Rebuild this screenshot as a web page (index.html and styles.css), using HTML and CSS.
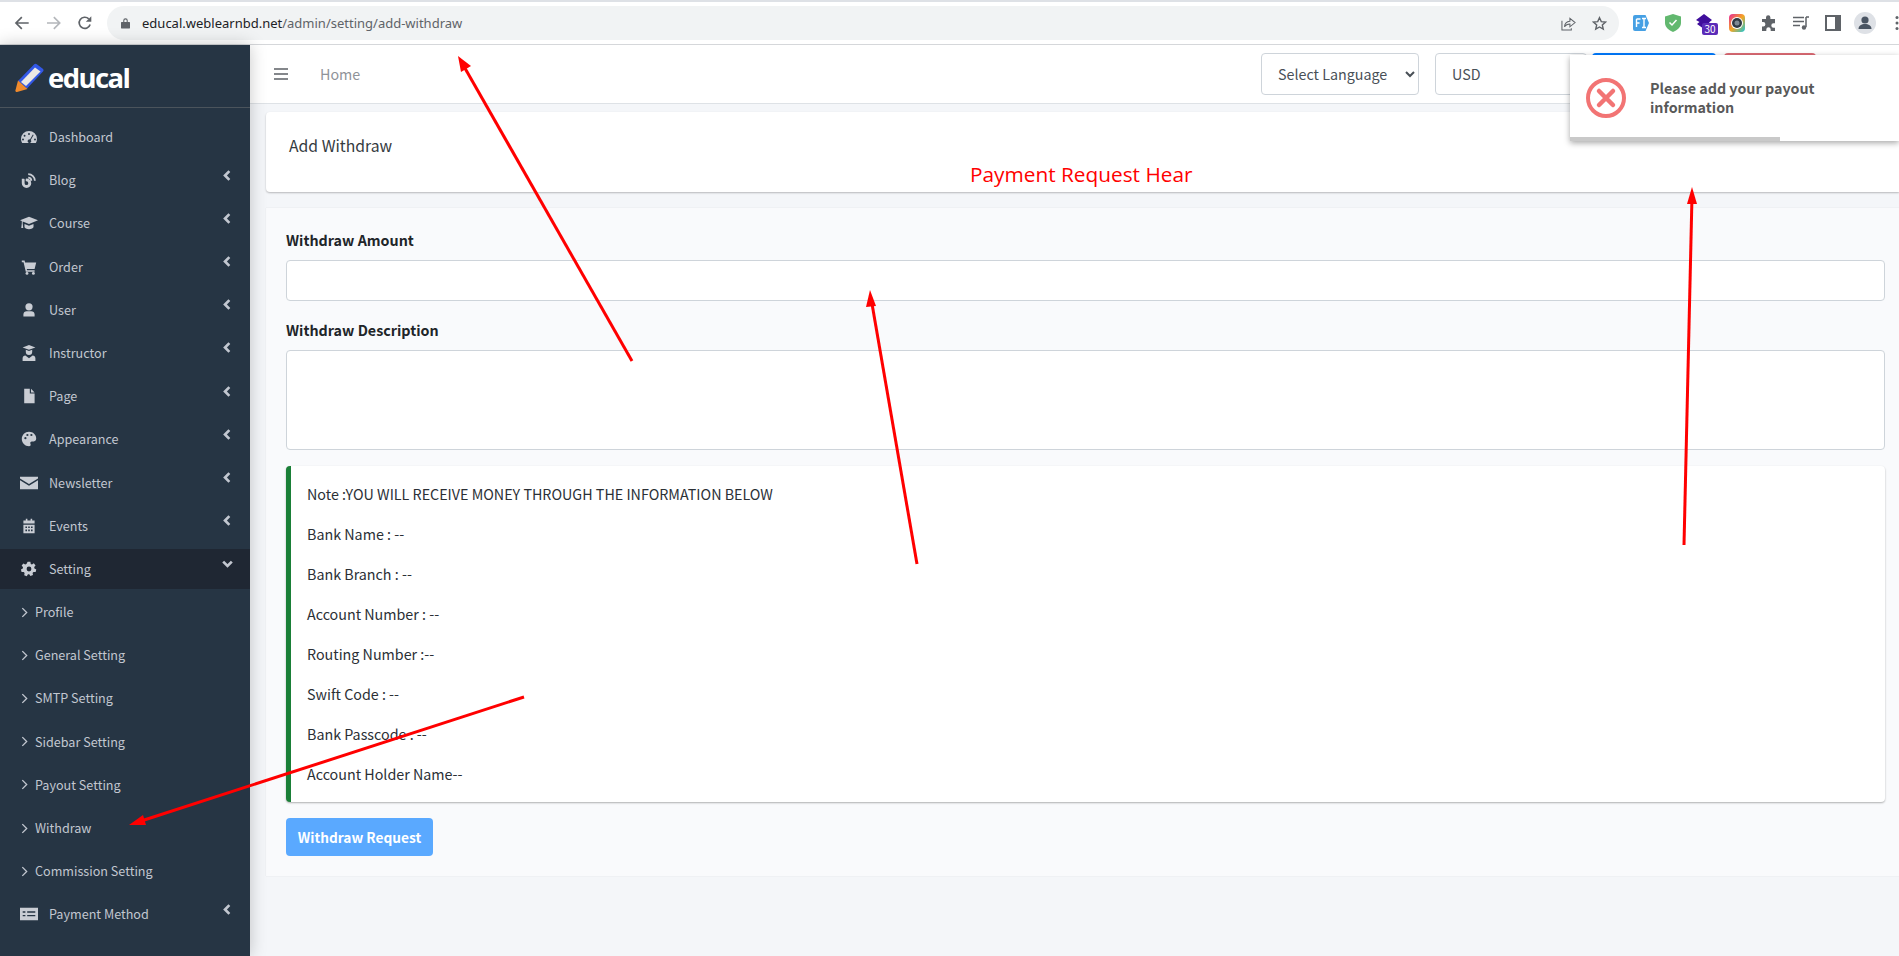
FILE: index.html
```html
<!DOCTYPE html>
<html lang="en">
<head>
<meta charset="utf-8">
<title>Add Withdraw</title>
<link rel="stylesheet" href="styles.css">
</head>
<body>
<svg width="0" height="0" class="defs">
  <symbol id="i-left" viewBox="0 0 10 14"><path d="M8 1.500 2.500 7 8 12.500" fill="none" stroke="currentColor" stroke-width="3.400"/></symbol>
  <symbol id="i-down" viewBox="0 0 14 10"><path d="M1.500 2 7 7.500 12.500 2" fill="none" stroke="currentColor" stroke-width="3.400"/></symbol>
  <symbol id="i-sub" viewBox="0 0 8 12"><path d="M1.500 1 6.500 6 1.500 11" fill="none" stroke="currentColor" stroke-width="1.500"/></symbol>
</svg>

<header class="browser">
  <div class="tabstrip"></div>
  <div class="toolbar">
    <svg class="nav-ic" viewBox="0 0 16 16"><path d="M15 8H2M8 2 2 8l6 6" fill="none" stroke="#5f6368" stroke-width="1.700"/></svg>
    <svg class="nav-ic" viewBox="0 0 16 16"><path d="M1 8h13M8 2l6 6-6 6" fill="none" stroke="#b4b7bb" stroke-width="1.700"/></svg>
    <svg class="nav-ic" viewBox="0 0 16 16"><path d="M13.400 9.500A5.700 5.700 0 1 1 12 3.800" fill="none" stroke="#5f6368" stroke-width="1.700"/><path d="M14.600 1.200v5.600H9z" fill="#5f6368"/></svg>
    <div class="omnibox">
      <svg class="lock" viewBox="0 0 10 12"><path d="M2.500 5V3.300a2.500 2.500 0 0 1 5 0V5H9a.8.8 0 0 1 1 .8v5.300a.8.8 0 0 1-1 .9H1a.8.8 0 0 1-1-.9V5.800A.8.8 0 0 1 1 5zm1.200 0h2.600V3.300a1.300 1.300 0 0 0-2.600 0z" fill="#5f6368"/></svg>
      <span class="url"><span class="host">educal.weblearnbd.net</span>/admin/setting/add-withdraw</span>
      <svg class="omni-ic share" viewBox="0 0 16 16"><path d="M9.500 5.500V2.500L15 7l-5.500 4.500V8.500C6.500 8.500 5 9.500 3.700 11.500 4 8 6 5.800 9.500 5.500zM1 5v10h10v-2" fill="none" stroke="#5f6368" stroke-width="1.100"/></svg>
      <svg class="omni-ic" viewBox="0 0 16 16"><path d="M8 1.800 9.900 6l4.500.5-3.400 3 1 4.500L8 11.700 4 14l1-4.500-3.400-3L6.100 6z" fill="none" stroke="#5f6368" stroke-width="1.500"/></svg>
    </div>
    <div class="exts">
      <svg class="ext" viewBox="0 0 18 18"><path d="M3 1h10.500L17 9l-3.500 8H3a2 2 0 0 1-2-2V3a2 2 0 0 1 2-2z" fill="#46a0e4"/><path d="M4.500 5h4M4.500 5v8M4.500 9h3M10 4.500h4M12 4.500v9M10 13.500h4" stroke="#fff" stroke-width="1.400" fill="none"/></svg>
      <svg class="ext" viewBox="0 0 18 18"><path d="M9 0 17 2.500V9c0 4-4 7.500-8 9-4-1.500-8-5-8-9V2.500z" fill="#62b86f"/><path d="m5.500 8.500 2.500 2.500 4.500-5" stroke="#fff" stroke-width="1.500" fill="none"/></svg>
      <div class="ext ext-badge">
        <svg viewBox="0 0 18 18"><path d="M8 0 16 6 13 8.500 15 10 8 15 1 10 3.500 8 0 6z" fill="#3f0e9c"/></svg>
        <span class="badge-num">30</span>
      </div>
      <svg class="ext" viewBox="0 0 18 18"><defs><linearGradient id="rb" x1="0" y1="0" x2="1" y2="1"><stop offset="0" stop-color="#e8279a"/><stop offset=".5" stop-color="#f5a623"/><stop offset="1" stop-color="#19c7d8"/></linearGradient></defs><rect x="1" y="0" width="16" height="18" rx="4" fill="url(#rb)"/><circle cx="9" cy="9" r="6" fill="#fff"/><circle cx="9" cy="9" r="5" fill="#2f3a44"/><circle cx="9" cy="9" r="2.500" fill="#7e8a94"/></svg>
      <svg class="ext" viewBox="0 0 18 18"><path d="M2 5h4V3.500a2.200 2.200 0 0 1 4.400 0V5H15v4.300h-1.500a2.200 2.200 0 0 0 0 4.400H15V17h-4.300v-1.500a2.200 2.200 0 0 0-4.400 0V17H2v-4.500h1.200a2.200 2.200 0 0 0 0-4.400H2z" fill="#5f6368"/></svg>
      <svg class="ext" viewBox="0 0 18 18"><path d="M1 3.500h11M1 7.500h11M1 11.500h7" stroke="#5f6368" stroke-width="1.500" fill="none"/><path d="M14 3v10M14 3h3" stroke="#5f6368" stroke-width="1.500" fill="none"/><circle cx="12" cy="13.500" r="2.200" fill="#5f6368"/></svg>
      <svg class="ext" viewBox="0 0 18 18"><rect x="2" y="2" width="14" height="14" fill="none" stroke="#5f6368" stroke-width="2"/><rect x="11" y="2" width="5" height="14" fill="#5f6368"/></svg>
      <div class="avatar"><svg viewBox="0 0 22 22"><circle cx="11" cy="8" r="3.600" fill="#4a5563"/><path d="M4.500 17c0-3.500 3-5 6.500-5s6.500 1.500 6.500 5z" fill="#4a5563"/></svg></div>
      <svg class="dots" viewBox="0 0 4 16"><circle cx="2" cy="2.500" r="1.500" fill="#5f6368"/><circle cx="2" cy="8" r="1.500" fill="#5f6368"/><circle cx="2" cy="13.500" r="1.500" fill="#5f6368"/></svg>
    </div>
  </div>
</header>

<div class="app">
  <aside class="sidebar">
    <div class="brand">
      <svg class="brand-ic" viewBox="0 0 30 30"><path d="M3 19 19 2.500c1-1 1.800-1 2.800-.2l6 4.500c1 .8 1 1.800.2 2.700L12 26.500z" fill="#3358e6"/><path d="M6 20 20 5.500l5.500 4L11 24z" fill="#ece8e4"/><path d="M3 18.500 12.500 27 2 30c-1 .2-1.800-.5-1.600-1.500z" fill="#f08a2c"/></svg>
      <span class="brand-text">educal</span>
    </div>
    <nav class="menu">
      <a class="item"><svg class="mi" viewBox="0 0 20 20"><path d="M10 2.500A10 10 0 0 0 0 12.500c0 1.800.5 3.500 1.400 5h17.200a10 10 0 0 0 1.400-5 10 10 0 0 0-10-10zM10 5a1.200 1.200 0 1 1 0 2.400A1.200 1.200 0 0 1 10 5zM4.500 7.300a1.200 1.200 0 1 1 0 2.400 1.200 1.200 0 0 1 0-2.400zM2.500 12a1.200 1.200 0 1 1 0 2.400 1.200 1.200 0 0 1 0-2.400zm15 0a1.200 1.200 0 1 1 0 2.400 1.200 1.200 0 0 1 0-2.400zM14.800 7l1 .6-3.600 6a2.300 2.300 0 1 1-1-.6z" fill="currentColor" fill-rule="evenodd"/></svg><span class="lbl">Dashboard</span></a>
      <a class="item"><svg class="mi" viewBox="0 0 20 20"><path d="M1 8.500h2.700a.9.900 0 0 1 .8.900V14a2.300 2.300 0 1 0 2.300-2.300.9.900 0 0 1-.9-.9V9a.9.900 0 0 1 .9-.9A5.900 5.900 0 1 1 1 14zM9 1.500a9.500 9.500 0 0 1 9.500 9.500h-2.300A7.200 7.200 0 0 0 9 3.800zM9 6a5 5 0 0 1 5 5h-2.200A2.800 2.800 0 0 0 9 8.200z" fill="currentColor"/></svg><span class="lbl">Blog</span><svg class="chev"><use href="#i-left"/></svg></a>
      <a class="item"><svg class="mi wide" viewBox="0 0 20 16"><path d="M10 1 20 5l-10 4L3 6.200v2.300l.6 5H1.400l.6-5V5.800L0 5zM5 9l5 2 5-2v3.500c0 1-2.500 2.500-5 2.500s-5-1.500-5-2.500z" fill="currentColor"/></svg><span class="lbl">Course</span><svg class="chev"><use href="#i-left"/></svg></a>
      <a class="item"><svg class="mi" viewBox="0 0 20 20"><path d="M1 2h3.500l.6 2.500H19l-2 8H7.200l.4 1.500H17v2H6L3.200 4H1z" fill="currentColor"/><circle cx="7.500" cy="18" r="1.800" fill="currentColor"/><circle cx="15.500" cy="18" r="1.800" fill="currentColor"/></svg><span class="lbl">Order</span><svg class="chev"><use href="#i-left"/></svg></a>
      <a class="item"><svg class="mi" viewBox="0 0 20 20"><circle cx="10" cy="6" r="4.500" fill="currentColor"/><path d="M3 18v-2.500C3 13 5 11.500 7 11.500h6c2 0 4 1.500 4 4V18z" fill="currentColor"/></svg><span class="lbl">User</span><svg class="chev"><use href="#i-left"/></svg></a>
      <a class="item"><svg class="mi" viewBox="0 0 20 20"><path d="M2 3 10 0l8 3-8 3zM6 6l4 1.500L14 6v2.500a4 4 0 0 1-8 0zM5.500 13l4.500 3.500 4.500-3.500c2 0 3.500 1.500 3.500 3.500V20H2v-3.500C2 14.500 3.500 13 5.500 13z" fill="currentColor"/></svg><span class="lbl">Instructor</span><svg class="chev"><use href="#i-left"/></svg></a>
      <a class="item"><svg class="mi" viewBox="0 0 20 20"><path d="M4 1h7v6h6v12H4zM12.500 1 17 5.500h-4.500z" fill="currentColor"/></svg><span class="lbl">Page</span><svg class="chev"><use href="#i-left"/></svg></a>
      <a class="item"><svg class="mi" viewBox="0 0 20 20"><path d="M10 1C5 1 1 5 1 10s4 9 9 9c2 0 2.500-1.500 1.800-3-.7-1.500.2-3 1.800-3H16c2 0 3-1.500 3-3.500C19 4.500 15 1 10 1z" fill="currentColor"/><circle cx="5.500" cy="9" r="1.400" fill="#263544"/><circle cx="8" cy="5" r="1.400" fill="#263544"/><circle cx="13" cy="5" r="1.400" fill="#263544"/></svg><span class="lbl">Appearance</span><svg class="chev"><use href="#i-left"/></svg></a>
      <a class="item"><svg class="mi wide" viewBox="0 0 20 16"><path d="M0 1h20v2L10 9 0 3zM0 5l10 6 10-6v10H0z" fill="currentColor"/></svg><span class="lbl">Newsletter</span><svg class="chev"><use href="#i-left"/></svg></a>
      <a class="item"><svg class="mi" viewBox="0 0 20 20"><path d="M6 1h2v2h4V1h2v2h3v4H3V3h3zM3 8.500h14V19H3zM5.500 10.500v2h2v-2zm3.500 0v2h2v-2zm3.500 0v2h2v-2zM5.500 14.500v2h2v-2zm3.500 0v2h2v-2zm3.500 0v2h2v-2z" fill="currentColor" fill-rule="evenodd"/></svg><span class="lbl">Events</span><svg class="chev"><use href="#i-left"/></svg></a>
      <a class="item open"><svg class="mi" viewBox="0 0 20 20"><path d="M8.300 1h3.400l.5 2.600 1.500.7 2.300-1.400 2.200 2.700-1.700 2 .3 1.700 2.300 1.200-.8 3.300-2.700-.1-1.100 1.300.5 2.600-3.200 1.300-1.500-2.200h-1.600L7.200 19l-3.200-1.300.5-2.600-1.100-1.300-2.700.1-.8-3.300 2.300-1.200.3-1.700-1.700-2 2.200-2.700 2.300 1.400 1.500-.7zM10 7a3 3 0 1 0 0 6 3 3 0 0 0 0-6z" fill="currentColor" fill-rule="evenodd"/></svg><span class="lbl">Setting</span><svg class="chev-d"><use href="#i-down"/></svg></a>
      <a class="item sub"><svg class="subchev"><use href="#i-sub"/></svg><span>Profile</span></a>
      <a class="item sub"><svg class="subchev"><use href="#i-sub"/></svg><span>General Setting</span></a>
      <a class="item sub"><svg class="subchev"><use href="#i-sub"/></svg><span>SMTP Setting</span></a>
      <a class="item sub"><svg class="subchev"><use href="#i-sub"/></svg><span>Sidebar Setting</span></a>
      <a class="item sub"><svg class="subchev"><use href="#i-sub"/></svg><span>Payout Setting</span></a>
      <a class="item sub"><svg class="subchev"><use href="#i-sub"/></svg><span>Withdraw</span></a>
      <a class="item sub"><svg class="subchev"><use href="#i-sub"/></svg><span>Commission Setting</span></a>
      <a class="item"><svg class="mi wide" viewBox="0 0 20 14"><path d="M0 0h20v14H0zM8 4v1.500h9V4zM8 8v1.500h9V8zM3 4v1.500h3V4zM3 8v1.500h3V8z" fill="currentColor" fill-rule="evenodd"/></svg><span class="lbl">Payment Method</span><svg class="chev"><use href="#i-left"/></svg></a>
    </nav>
  </aside>

  <main class="main">
    <div class="topnav">
      <svg class="burger" viewBox="0 0 14 12"><path d="M0 1h14M0 6h14M0 11h14" stroke="#5c6066" stroke-width="1.600"/></svg>
      <span class="home">Home</span>
      <div class="top-right">
        <select class="ctl lang"><option>Select Language</option></select>
        <div class="ctl cur">USD</div>
        <div class="btn-peek blue"></div>
        <div class="btn-peek red"></div>
      </div>
    </div>
    <div class="content">
      <section class="title-card"><h1>Add Withdraw</h1></section>
      <section class="form-card">
        <label class="field-label">Withdraw Amount</label>
        <input class="field" type="text">
        <label class="field-label second">Withdraw Description</label>
        <textarea class="field area"></textarea>
        <div class="note">
          <p>Note :YOU WILL RECEIVE MONEY THROUGH THE INFORMATION BELOW</p>
          <p>Bank Name : --</p>
          <p>Bank Branch : --</p>
          <p>Account Number : --</p>
          <p>Routing Number :--</p>
          <p>Swift Code : --</p>
          <p>Bank Passcode : --</p>
          <p>Account Holder Name--</p>
        </div>
        <button class="submit" type="button">Withdraw Request</button>
      </section>
    </div>
  </main>
</div>

<div class="toast">
  <svg class="toast-ic" viewBox="0 0 40 40"><circle cx="20" cy="20" r="18" fill="none" stroke="#f27474" stroke-width="4"/><path d="M13 13l14 14M27 13 13 27" stroke="#f27474" stroke-width="4.500" stroke-linecap="round"/></svg>
  <div class="toast-text">Please add your payout information</div>
  <div class="toast-bar"></div>
</div>

<svg class="marks" viewBox="0 0 1899 956">
  <path d="M632 361 462 63" class="ln"/><path d="M458 56 471 66 461 72z" class="hd"/>
  <path d="M917 564 871 298" class="ln"/><path d="M870 290 876 306 866 307z" class="hd"/>
  <path d="M1684 545 1692 196" class="ln"/><path d="M1692 187 1697 204 1687 204z" class="hd"/>
  <path d="M524 697 138 822" class="ln"/><path d="M129 825 143 815 146 825z" class="hd"/>
</svg>
<span class="callout">Payment Request Hear</span>
</body>
</html>
```
FILE: styles.css
```css
* { box-sizing: border-box; }
html, body { margin: 0; height: 956px; overflow: hidden; }
body {
  width: 1899px;
  position: relative;
  display: flex;
  flex-direction: column;
  background: #f4f6f9;
  font-family: "Noto Sans CJK SC", "Noto Sans", sans-serif;
  font-size: 14.300px;
  line-height: 24px;
  color: #212529;
}
.defs { position: absolute; }

/* browser chrome */
.browser { height: 45px; flex: none; background: #fff; border-bottom: 1px solid #d5d7da; }
.tabstrip { height: 2px; background: #dee1e6; }
.toolbar { height: 42px; display: flex; align-items: center; padding-left: 14px; }
.nav-ic { width: 16px; height: 16px; margin-right: 16px; }
.omnibox {
  width: 1512px; height: 34px; margin-left: -2px;
  flex: none;
  display: flex; align-items: center;
  background: #f1f3f4; border-radius: 17px;
  padding: 0 12px 0 14px;
}
.lock { width: 9px; height: 12px; margin-right: 12px; flex: none; }
.url { font-size: 13px; color: #5f6368; flex: 1; font-family: "Noto Sans", sans-serif; line-height: 20px; }
.host { color: #202124; }
.omni-ic { width: 15px; height: 15px; margin-left: 16px; flex: none; }
.exts { display: flex; align-items: center; padding-left: 13px; }
.ext { width: 18px; height: 18px; margin-right: 14px; flex: none; }
.ext-badge { position: relative; }
.badge-num {
  position: absolute; left: 6px; top: 9px;
  width: 16px; height: 12px;
  background: #5b2bb8; color: #fff; border-radius: 2px;
  font-size: 10px; line-height: 12px; text-align: center;
}
.avatar { width: 22px; height: 22px; border-radius: 50%; background: #dee1e6; margin-left: -2px; margin-right: 19px; flex: none; }
.avatar svg { display: block; }
.dots { width: 4px; height: 16px; flex: none; }

/* page */
.app { flex: 1; display: flex; min-height: 0; }
.sidebar {
  width: 250px; flex: none;
  background: #263544; color: #c2c7d0;
  font-size: 12.600px; line-height: 20px;
  box-shadow: 0 0 16px rgba(0,0,0,.22);
  position: relative; z-index: 2;
}
.brand { height: 63px; display: flex; align-items: center; padding-left: 15px; border-bottom: 1px solid #4b545c; }
.brand-ic { width: 30px; height: 30px; margin-right: 3px; margin-top: 2px; }
.brand-text { font-family: "Open Sans", sans-serif; font-weight: 700; font-size: 27.500px; line-height: 36px; color: #fff; letter-spacing: -1.600px; margin-top: 3px; }
.menu { padding-top: 9px; }
.item { height: 40px; margin-bottom: 3.200px; display: flex; align-items: center; padding-left: 21px; position: relative; }
.item.open { background: #1f2733; }
.mi { width: 16px; height: 16px; margin-right: 12px; flex: none; color: #c9cdd4; }
.mi.wide { width: 18px; margin-left: -1px; margin-right: 11px; }
.lbl { flex: 1; }
.chev { width: 8px; height: 11px; margin-right: 19px; margin-top: -10px; color: #c2c7d0; flex: none; }
.chev-d { width: 11px; height: 8px; margin-right: 17px; margin-top: -10px; flex: none; }
.subchev { width: 7px; height: 11px; margin-right: 7px; flex: none; }

.main { flex: 1; min-width: 0; }
.topnav {
  height: 59px;
  background: #fff; border-bottom: 1px solid #dee2e6;
  display: flex; align-items: center;
  padding-left: 24px;
}
.burger { width: 14px; height: 12px; margin-top: -1px; }
.home { margin-left: 32px; color: #8f9399; margin-top: -1px; }
.top-right { margin-left: auto; display: flex; align-items: flex-start; align-self: flex-start; padding-top: 8px; }
.ctl { height: 42px; border: 1px solid #ced4da; border-radius: 4px; background: #fff; color: #495057; font: inherit; }
.lang { width: 158px; padding: 0 0 2px 12px; }
.cur { width: 152px; margin-left: 16px; padding: 8px 16px; }
.btn-peek { height: 42px; border-radius: 4px; }
.blue { width: 124px; margin-left: 5px; background: #007bff; }
.red { width: 92px; margin-left: 8px; margin-right: 83px; background: #dd6b75; }

.content { padding: 8px 0 0 16px; }
.title-card {
  height: 80px; background: #fff;
  border-radius: 4px 0 0 4px;
  box-shadow: 0 1px 2px rgba(0,0,0,.25);
  padding: 22px 23px;
}
.title-card h1 { margin: 0; font-size: 15.750px; font-weight: 400; line-height: 24px; color: #343a40; }
.form-card {
  margin-top: 16px; height: 668px;
  background: #f9fafc;
  box-shadow: 0 0 1px rgba(0,0,0,.12);
  padding: 20px 14px 0 20px;
}
.field-label { display: block; font-weight: 700; line-height: 24px; color: #212529; margin-bottom: 8px; }
.field-label.second { margin-top: 17px; }
.field { display: block; width: 100%; height: 41px; background: #fff; border: 1px solid #ced4da; border-radius: 4px; padding: 0; resize: none; margin: 0; }
.area { height: 100px; }
.note {
  margin-top: 16px; height: 336px;
  background: #fff;
  border-left: 5px solid #1a7f37;
  border-radius: 4px;
  box-shadow: 0 1px 2px rgba(0,0,0,.3);
  padding: 16px;
  color: #2b3036;
}
.note p { margin: 0 0 16px; }
.submit {
  display: block; margin-top: 16px;
  width: 147px; height: 38px; padding: 0;
  background: #5aa9ff; color: #fff;
  border: 0; border-radius: 4px;
  font: inherit; font-size: 13.700px; font-weight: 700;
}

/* overlays */
.toast {
  position: absolute; left: 1570px; top: 55px; z-index: 5;
  width: 329px; height: 86px;
  background: #fff;
  box-shadow: 0 2px 6px rgba(0,0,0,.35);
}
.toast-ic { position: absolute; left: 16px; top: 23px; width: 40px; height: 40px; }
.toast-text { position: absolute; left: 80px; top: 23px; width: 200px; font-weight: 700; line-height: 19px; color: #595959; }
.toast-bar { position: absolute; left: 0; bottom: 0; width: 210px; height: 4px; background: #c9c9c9; }
.marks { position: absolute; left: 0; top: 0; width: 1899px; height: 956px; z-index: 6; pointer-events: none; }
.ln { stroke: #f00; stroke-width: 3; fill: none; }
.hd { fill: #f00; }
.callout { position: absolute; left: 970px; top: 158px; z-index: 6; font-family: "Open Sans", sans-serif; font-size: 20.800px; line-height: 32px; color: #f00; }
```
